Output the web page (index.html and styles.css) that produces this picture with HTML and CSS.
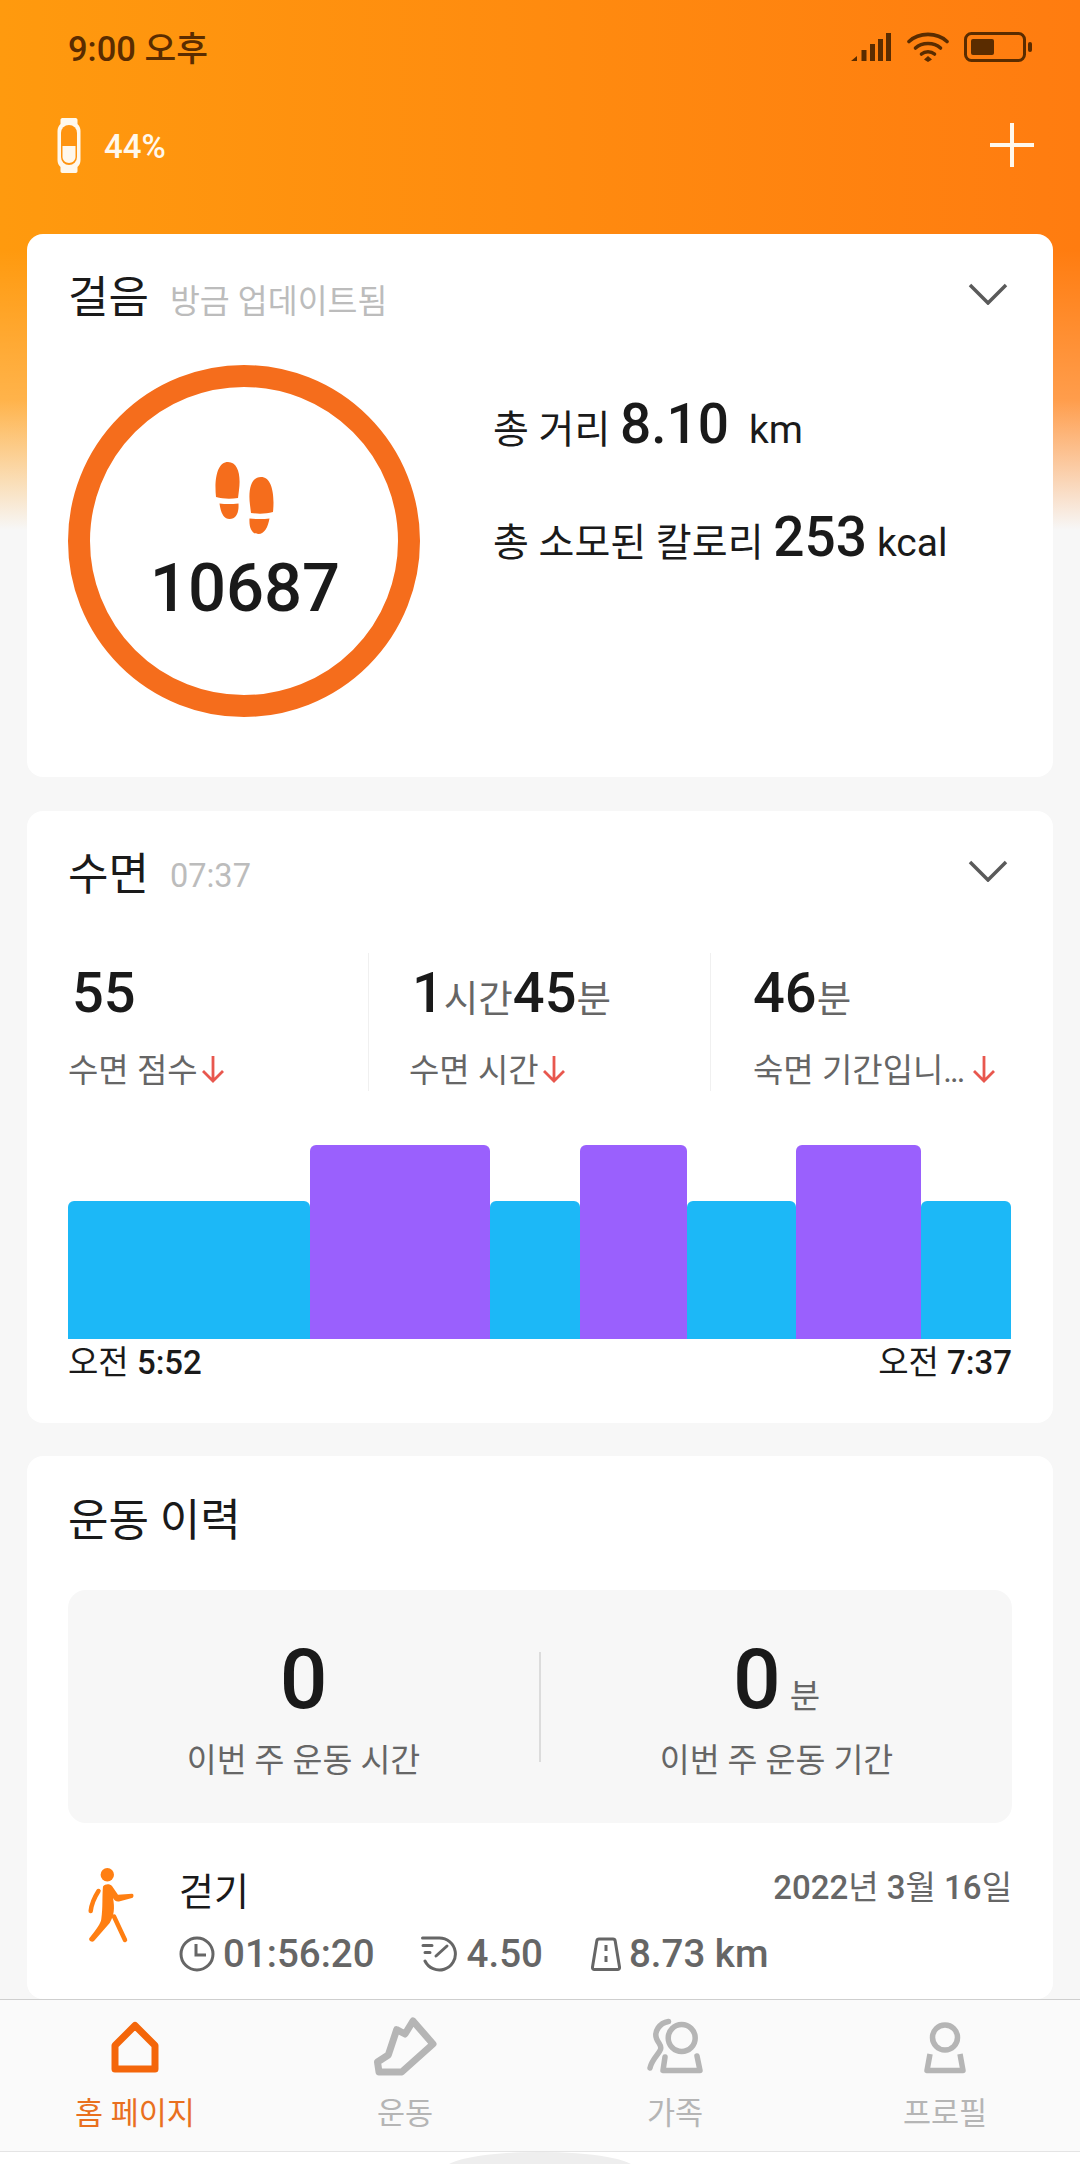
FILE: index.html
```html
<!DOCTYPE html>
<html lang="ko">
<head>
<meta charset="utf-8">
<title>Mi Fit</title>
<link rel="stylesheet" href="styles.css">
</head>
<body>
<div class="page">
  <main class="content">
    <div class="status">
      <span class="clock">9:00 오후</span>
      <div class="status-icons">
        <svg class="sig" viewBox="0 0 40 30"><path d="M0 29l6-5v5zM10.500 18h5v11h-5zM19 12h5v17h-5zM27 7h5v22h-5zM35 1h5v28h-5z"/></svg>
        <svg class="wifi" viewBox="0 0 42 30"><g fill="none" stroke-width="3.600" stroke-linecap="round"><path d="M2 9.500C12 0 30 0 40 9.500"/><path d="M8.500 16C15 10 27 10 33.500 16"/><path d="M14.500 22C18 19 24 19 27.500 22"/></g><path class="fillme" d="M21 24l4 3.500-4 2.500-4-2.500z"/></svg>
        <svg class="batt" viewBox="0 0 69 30"><rect x="1.500" y="1.500" width="59" height="27" rx="6" fill="none" stroke-width="3"/><rect class="fillme" x="7" y="7" width="23" height="16" rx="2"/><rect class="fillme" x="64" y="10" width="4" height="10" rx="2"/></svg>
      </div>
    </div>
    <div class="device">
      <div class="device-left">
        <svg class="band" viewBox="0 0 23 55"><path d="M5 0h13c1.500 0 2 1 2 2v4c2 2 3 4 3 7v29c0 3-1 5-3 7v4c0 1-.5 2-2 2H5c-1.500 0-2-1-2-2v-4c-2-2-3-4-3-7V13c0-3 1-5 3-7V2c0-1 .5-2 2-2z" fill="#fff8ec"/><rect x="3.500" y="7" width="16" height="40" rx="8" fill="#ff9410"/><path d="M5 28h13v11c0 3-3 6-6.500 6S5 42 5 39z" fill="#fff8ec"/></svg>
        <span class="pct">44%</span>
      </div>
      <svg class="plus" viewBox="0 0 44 44"><path d="M22 0v44M0 22h44" stroke="#fff8ec" stroke-width="4"/></svg>
    </div>

    <section class="card steps">
      <header class="card-head">
        <div class="head-text"><h2 class="title">걸음</h2><span class="sub">방금 업데이트됨</span></div>
        <svg class="chev" viewBox="0 0 40 22"><path d="M2 2l18 18L38 2" fill="none" stroke="#5a5a5a" stroke-width="3.500"/></svg>
      </header>
      <div class="steps-body">
        <div class="ring">
          <svg class="feet" viewBox="0 0 59 72"><path d="M1 35C-1 15 3 0 13 0c10 0 13 13 11 28l-1 8c-7 1-15 1-22-1z"/><path d="M4.500 41.500c6 .8 12 .8 19 0 .5 9-2 15.500-9 15.500-6 0-9-7-10-15.500z"/><path d="M58 50C60 30 56 15 46 15c-10 0-13 13-11 28l1 8c7 1 15 1 22-1z"/><path d="M54.500 56.500c-6 .8-13 .8-20 0-.5 9 2 15.500 9 15.500 6 0 9.500-7 11-15.500z"/></svg>
          <div class="count">10687</div>
        </div>
        <div class="totals">
          <p class="total">총 거리 <b class="big">8.10</b><span class="unit gap">km</span></p>
          <p class="total">총 소모된 칼로리 <b class="big">253</b><span class="unit">kcal</span></p>
        </div>
      </div>
    </section>

    <section class="card sleep">
      <header class="card-head">
        <div class="head-text"><h2 class="title">수면</h2><span class="sub">07:37</span></div>
        <svg class="chev" viewBox="0 0 40 22"><path d="M2 2l18 18L38 2" fill="none" stroke="#5a5a5a" stroke-width="3.500"/></svg>
      </header>
      <div class="metrics">
        <div class="metric first">
          <div class="val"><b>55</b></div>
          <div class="lab"><span>수면 점수</span><svg class="down" viewBox="0 0 24 28"><path d="M12 1v25M2 16l10 10 10-10" fill="none" stroke="#e8574e" stroke-width="2.800"/></svg></div>
        </div>
        <div class="metric second">
          <div class="val"><b>1</b><span>시간</span><b>45</b><span>분</span></div>
          <div class="lab"><span>수면 시간</span><svg class="down" viewBox="0 0 24 28"><path d="M12 1v25M2 16l10 10 10-10" fill="none" stroke="#e8574e" stroke-width="2.800"/></svg></div>
        </div>
        <div class="metric third">
          <div class="val"><b>46</b><span>분</span></div>
          <div class="lab"><span>숙면 기간입니<span class="dots">...</span></span><svg class="down wide" viewBox="0 0 24 28"><path d="M12 1v25M2 16l10 10 10-10" fill="none" stroke="#e8574e" stroke-width="2.800"/></svg></div>
        </div>
      </div>
      <div class="chart">
        <div class="seg light" style="width:242px"></div>
        <div class="seg deep" style="width:180px"></div>
        <div class="seg light" style="width:90px"></div>
        <div class="seg deep" style="width:107px"></div>
        <div class="seg light" style="width:109px"></div>
        <div class="seg deep" style="width:125px"></div>
        <div class="seg light" style="width:90px"></div>
      </div>
      <div class="chart-times"><span>오전 <b>5:52</b></span><span>오전 <b>7:37</b></span></div>
    </section>

    <section class="card history">
      <h2 class="title">운동 이력</h2>
      <div class="panel">
        <div class="panel-col">
          <div class="panel-num">0</div>
          <div class="panel-lab">이번 주 운동 시간</div>
        </div>
        <div class="panel-rule"></div>
        <div class="panel-col">
          <div class="panel-num">0<span class="panel-unit">분</span></div>
          <div class="panel-lab">이번 주 운동 기간</div>
        </div>
      </div>
      <div class="walk">
        <svg class="walker" viewBox="0 0 46 75"><circle cx="19.300" cy="6.700" r="6.700" fill="#ff7f12"/><path d="M15 18.500C17 15.500 22 15.500 24 18L30 26.700 44 25.700C46 25.600 46 29.500 44 30L31 33.500C28 34 26 32 25 30 27 40 26 48 21.700 55L6 73C3.500 75 0 72 1.500 70 8 62 13 55 13.300 51 15 40 14 28 15 18.500Z" fill="#ff7f12"/><path d="M10.500 23C6 30 3.500 36 2.700 43M26 48.500L37 72" fill="none" stroke="#ff7f12" stroke-width="4.500" stroke-linecap="round"/></svg>
        <div class="walk-main">
          <div class="walk-top"><span class="walk-name">걷기</span><span class="walk-date"><b>2022</b>년 <b>3</b>월 <b>16</b>일</span></div>
          <div class="walk-stats">
            <div class="stat">
              <svg class="st-clock" viewBox="0 0 36 36"><g fill="none" stroke="#666" stroke-width="3"><circle cx="18" cy="18" r="16"/><path d="M17 8v11h10"/></g></svg>
              <span>01:56:20</span>
            </div>
            <div class="stat">
              <svg class="st-speed" viewBox="0 0 38 36"><g fill="none" stroke="#666" stroke-width="3" stroke-linecap="round"><path d="M1.500 2H18A16 16 0 1 1 4 25"/><path d="M15 20L26 10M2 9.500h9M4 16.500h5"/></g></svg>
              <span>4.50</span>
            </div>
            <div class="stat road">
              <svg class="st-road" viewBox="0 0 30 34"><g fill="none" stroke="#666" stroke-width="3" stroke-linejoin="round"><path d="M8 2h14c1.500 0 2 .8 2.200 2L28.500 30c.2 1.500-.5 2.500-2 2.500h-23c-1.500 0-2.200-1-2-2.500L5.800 4C6 2.800 6.500 2 8 2z"/><path d="M15 8v6M15 19v6"/></g></svg>
              <span>8.73 km</span>
            </div>
          </div>
        </div>
      </div>
    </section>
  </main>

  <nav class="tabs">
    <div class="tab active">
      <svg viewBox="0 0 60 64"><path d="M30 8.500L50 28.500V52H10V28.500z" fill="none" stroke="#f4660a" stroke-width="7" stroke-linejoin="round"/></svg>
      <span>홈 페이지</span>
    </div>
    <div class="tab">
      <svg viewBox="0 0 70 64"><path d="M26.700 12.700L35 17 43 4 63 27 31.700 55H9L7.500 45 18.300 38z" fill="none" stroke="#b5b5b5" stroke-width="7" stroke-linejoin="round"/></svg>
      <span>운동</span>
    </div>
    <div class="tab">
      <svg viewBox="0 0 60 64"><g fill="none" stroke="#b5b5b5" stroke-width="5.500" stroke-linecap="round" stroke-linejoin="round"><circle cx="36.700" cy="21" r="13.500"/><path d="M20 40l-2 13.500h37L52 39"/><path d="M23.500 4.500C14 6 9 15 11.500 21.500 13.500 27 17 28 15.500 32.500 14 37 7 42 5 51"/></g></svg>
      <span>가족</span>
    </div>
    <div class="tab">
      <svg viewBox="0 0 60 64"><g fill="none" stroke="#b5b5b5" stroke-width="5.500" stroke-linejoin="round"><circle cx="30" cy="20.500" r="12.500"/><path d="M15 37l-3 16.500h36L45 37"/></g></svg>
      <span>프로필</span>
    </div>
  </nav>
  <div class="gesture"><div class="gesture-bump"></div></div>
</div>
</body>
</html>
```

FILE: styles.css
```css
* { box-sizing: border-box; }
html, body { margin: 0; padding: 0; }
body {
  width: 1080px;
  height: 2164px;
  overflow: hidden;
  font-family: Roboto, "Noto Sans CJK KR", sans-serif;
  color: #1a1a1a;
  background: #f7f7f7;
}
.page { height: 2164px; display: flex; flex-direction: column; }
.content {
  flex: 1;
  min-height: 0;
  overflow: hidden;
  padding: 0 27px;
  display: flex;
  flex-direction: column;
  background:
    linear-gradient(180deg, rgba(247,247,247,0) 250px, rgba(255,255,255,.25) 400px, #f7f7f7 530px),
    linear-gradient(90deg, #ff9a0e 0%, #ff7c10 100%);
}
.content > * { flex: none; }

/* status */
.status { height: 94px; display: flex; justify-content: space-between; align-items: center; padding: 0 20px 0 41px; }
.clock { font-size: 34.500px; font-weight: 500; color: #5a2c00; margin-top: -3px; }
.status-icons { display: flex; align-items: center; gap: 15px; }
.status-icons svg { display: block; height: 30px; fill: #5a2c00; stroke: #5a2c00; }
.status-icons .fillme { stroke: none; }
.sig { width: 40px; margin-right: 1px; stroke: none !important; }
.wifi { width: 42px; }
.wifi .fillme { fill: #5a2c00; }
.batt { width: 69px; }

.device { height: 140px; display: flex; justify-content: space-between; align-items: flex-start; padding: 24px 19px 0 30px; }
.device-left { display: flex; align-items: center; gap: 23px; }
.band { width: 24px; height: 55px; display: block; }
.pct { font-size: 33px; font-weight: 500; color: #fff8ec; margin-top: 1px; }
.plus { width: 44px; height: 44px; margin-top: 5px; display: block; }

/* cards */
.card { background: #fff; border-radius: 16px; padding: 34px 41px 0; margin-bottom: 33px; }
.card-head { display: flex; justify-content: space-between; align-items: flex-start; }
.head-text { display: flex; align-items: center; gap: 21px; height: 60px; }
.title { margin: 0; font-size: 44px; font-weight: 400; line-height: 60px; color: #1a1a1a; }
.sub { font-size: 32.500px; color: #bcbcbc; margin-top: 1px; }
.chev { width: 40px; height: 22px; margin: 15px 4px 0 0; display: block; }

/* steps */
.steps { height: 543px; margin-bottom: 34px; }
.steps-body { display: flex; align-items: flex-start; gap: 73px; margin-top: 37px; }
.ring {
  width: 352px; height: 352px; flex: none;
  border: 22px solid #f56d1c;
  border-radius: 50%;
  display: flex; flex-direction: column; align-items: center;
  padding-top: 75px;
}
.feet { width: 59px; height: 72px; fill: #f56d1c; display: block; }
.count { font-size: 67px; font-weight: 500; line-height: 78px; margin-top: 15px; margin-left: 2px; }
.totals { display: flex; flex-direction: column; gap: 27px; padding-top: 19px; }
.total { margin: 0; font-size: 39px; line-height: 80px; white-space: nowrap; color: #1a1a1a; }
.big { font-size: 55px; font-weight: 500; }
.unit { font-size: 39px; margin-left: 10px; }
.unit.gap { margin-left: 20px; }

/* sleep */
.sleep { height: 612px; }
.metrics { display: grid; grid-template-columns: 300px 342px 301px; margin-top: 48px; }
.metric { height: 138px; padding-left: 40px; border-left: 1px solid #f0f0f0; }
.metric.first { padding-left: 0; border-left: 0; }
.metric.third { padding-left: 42px; }
.val { height: 70px; display: flex; align-items: baseline; padding: 7px 0 0 3px; line-height: 66px; font-size: 37.500px; color: #666; }
.metric.first .val { padding-left: 4px; }
.metric.third .val { padding-left: 0; }
.val b { font-size: 56px; font-weight: 500; color: #1a1a1a; }
.lab { display: flex; align-items: center; height: 40px; margin-top: 25px; font-size: 33px; color: #666; white-space: nowrap; }
.dots { letter-spacing: -2px; }
.down { width: 24px; height: 28px; margin-left: 3px; margin-top: 2px; }
.down.wide { margin-left: 9px; }
.chart { display: flex; align-items: flex-end; height: 194px; margin-top: 54px; }
.seg { border-radius: 6px 6px 0 0; }
.seg.light { height: 138px; background: #1cb8f7; }
.seg.deep { height: 194px; background: #9a60fd; }
.chart-times { display: flex; justify-content: space-between; font-size: 33px; line-height: 48px; color: #1a1a1a; }
.chart-times b { font-weight: 500; }

/* history */
.history { flex: 1 !important; margin-bottom: 0; padding-top: 35px; min-height: 0; }
.panel {
  display: flex; align-items: flex-start;
  background: #f7f7f7;
  border-radius: 18px;
  height: 233px;
  margin-top: 39px;
}
.panel-col { flex: 1; display: flex; flex-direction: column; align-items: center; }
.panel-num { font-size: 84px; font-weight: 500; line-height: 100px; height: 100px; margin-top: 40px; white-space: nowrap; }
.panel-unit { font-size: 33px; font-weight: 400; color: #666; margin-left: 9px; line-height: 1; }
.panel-lab { font-size: 32.500px; line-height: 46px; color: #666; margin-top: 8px; }
.panel-rule { width: 2px; height: 110px; margin-top: 62px; background: #dcdcdc; }
.walk { display: flex; margin-top: 45px; }
.walker { width: 46px; height: 75px; flex: none; margin-left: 20px; display: block; }
.walk-main { flex: 1; margin-left: 45px; }
.walk-top { display: flex; justify-content: space-between; align-items: flex-start; height: 67px; margin-top: -3px; }
.walk-name { font-size: 38px; line-height: 54px; color: #1a1a1a; }
.walk-date { font-size: 33px; line-height: 46px; color: #666; }
.walk-date b { font-weight: 500; }
.walk-stats { display: flex; gap: 46px; }
.stat { display: flex; align-items: center; gap: 8px; font-size: 38.500px; font-weight: 500; color: #666; line-height: 44px; }
.stat svg { display: block; }
.stat.road { margin-left: 2px; }
.st-clock { width: 36px; height: 36px; }
.st-speed { width: 38px; height: 36px; }
.st-road { width: 30px; height: 34px; }

/* tabs */
.tabs {
  flex: none;
  height: 153px;
  background: #fafafa;
  border-top: 1px solid #cfcfcf;
  border-bottom: 1px solid #e4e4e4;
  display: grid;
  grid-template-columns: repeat(4, 270px);
  padding-top: 17px;
}
.tab { display: flex; flex-direction: column; align-items: center; font-size: 30.500px; line-height: 40px; color: #b5b5b5; }
.tab svg { height: 64px; display: block; margin-bottom: 13px; }
.tab.active { color: #e9701e; }
.gesture { flex: none; height: 12px; background: #fff; overflow: hidden; display: flex; justify-content: center; }
.gesture-bump { width: 190px; height: 34px; border-radius: 50%; background: #eeeeee; flex: none; }
```
